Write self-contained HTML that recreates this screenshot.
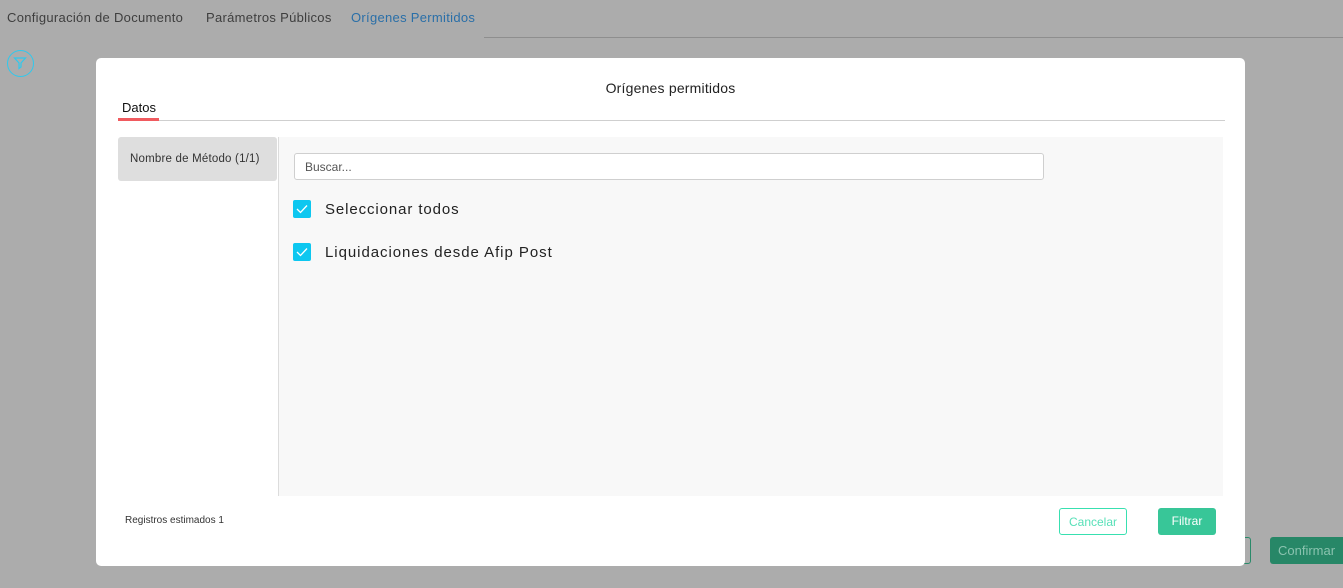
<!DOCTYPE html>
<html><head><meta charset="utf-8"><style>
*{box-sizing:border-box;margin:0;padding:0}
body{width:1343px;height:588px;background:#acacac;font-family:"Liberation Sans",sans-serif;position:relative;overflow:hidden;color:#333}
.a{position:absolute}
.tab{top:10px;font-size:13px;color:#3e3e3e;letter-spacing:.3px}
.cb{position:absolute;width:18px;height:18px;background:#0dc7f0;border-radius:2px}
.cb svg{position:absolute;left:3px;top:4px}
</style></head><body>
<div class="a tab" style="left:7px">Configuración de Documento</div>
<div class="a tab" style="left:206px">Parámetros Públicos</div>
<div class="a tab" style="left:351px;color:#2a6fa8">Orígenes Permitidos</div>
<div class="a" style="left:484px;top:37px;width:859px;height:1px;background:#8e8e8e"></div>
<div class="a" style="left:7px;top:50px;width:27px;height:27px;border:1.5px solid #2ec9ee;border-radius:50%"><svg class="a" style="left:5px;top:5px" width="14" height="14" viewBox="0 0 14 14"><path d="M1.5 2H12.5L8 7V11L6 12.5V7Z" fill="none" stroke="#2ec9ee" stroke-width="1.2"/></svg></div>
<div class="a" style="left:1190px;top:537px;width:61px;height:27px;border:1px solid #2a8a6a;border-radius:3px"></div>
<div class="a" style="left:1270px;top:537px;width:80px;height:27px;background:#278767;border-radius:3px;color:#8ac3af;font-size:13px;padding:6px 8px">Confirmar</div>

<div class="a" style="left:96px;top:58px;width:1149px;height:508px;background:#fff;border-radius:5px">
  <div class="a" style="left:0;width:100%;top:22px;text-align:center;font-size:14px;color:#222;letter-spacing:.2px">Orígenes permitidos</div>
  <div class="a" style="left:26px;top:42px;font-size:13px;color:#111">Datos</div>
  <div class="a" style="left:22px;top:62px;width:1107px;height:1px;background:#cfcfcf"></div>
  <div class="a" style="left:22px;top:60px;width:41px;height:3px;background:#f05a5f"></div>
  <div class="a" style="left:22px;top:79px;width:159px;height:44px;background:#dedede;border-radius:3px;font-size:11.5px;color:#333;padding:16px 0 0 12px;letter-spacing:.2px">Nombre de Método (1/1)</div>
  <div class="a" style="left:182px;top:79px;width:1px;height:359px;background:#dcdcdc"></div>
  <div class="a" style="left:183px;top:79px;width:944px;height:359px;background:#f8f8f8">
    <div class="a" style="left:15px;top:16px;width:750px;height:27px;border:1px solid #cfcfcf;border-radius:3px;background:#fff;font-size:12px;color:#555;padding:6px 10px">Buscar...</div>
    <div class="cb" style="left:14px;top:63px"><svg width="12" height="10" viewBox="0 0 12 10"><path d="M1 5L4.5 8.5L11 1.5" fill="none" stroke="#fff" stroke-width="1.3"/></svg></div>
    <div class="a" style="left:46px;top:64px;font-size:15px;color:#222;letter-spacing:.9px">Seleccionar todos</div>
    <div class="cb" style="left:14px;top:106px"><svg width="12" height="10" viewBox="0 0 12 10"><path d="M1 5L4.5 8.5L11 1.5" fill="none" stroke="#fff" stroke-width="1.3"/></svg></div>
    <div class="a" style="left:46px;top:107px;font-size:15px;color:#222;letter-spacing:.95px">Liquidaciones desde Afip Post</div>
  </div>
  <div class="a" style="left:29px;top:457px;font-size:10px;color:#333">Registros estimados 1</div>
  <div class="a" style="left:963px;top:450px;width:68px;height:27px;border:1px solid #38e0b0;border-radius:3px;font-size:12px;color:#58e0b8;text-align:center;padding-top:6px">Cancelar</div>
  <div class="a" style="left:1062px;top:450px;width:58px;height:27px;background:#38c698;border-radius:3px;font-size:12px;color:#fff;text-align:center;padding-top:6px">Filtrar</div>
</div>
</body></html>
